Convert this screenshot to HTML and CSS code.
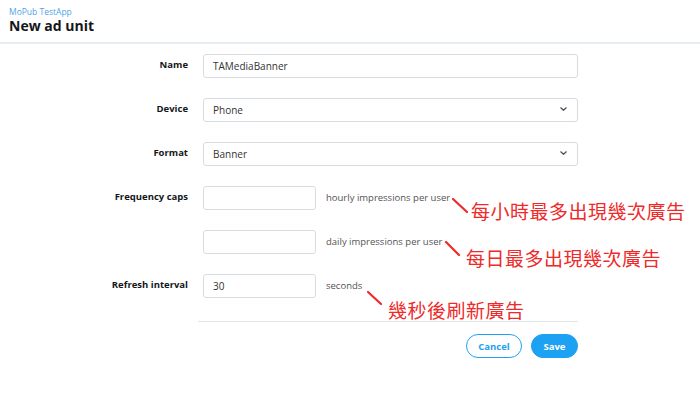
FILE: index.html
```html
<!DOCTYPE html>
<html>
<head>
<meta charset="utf-8">
<link rel="stylesheet" href="styles.css">
</head>
<body>
<header class="top">
  <div class="app">MoPub TestApp</div>
  <h1 class="title">New ad unit</h1>
</header>
<main class="page">
  <form class="form">
    <label class="lbl">Name</label>
    <div class="field"><div class="ctl wide">TAMediaBanner</div></div>

    <label class="lbl">Device</label>
    <div class="field"><div class="ctl wide sel">Phone<svg class="chev" width="7" height="4" viewBox="0 0 7 4"><path d="M0.5 0.5 L3.5 3.3 L6.5 0.5" fill="none" stroke="#4a4f5c" stroke-width="1.2"/></svg></div></div>

    <label class="lbl">Format</label>
    <div class="field"><div class="ctl wide sel">Banner<svg class="chev" width="7" height="4" viewBox="0 0 7 4"><path d="M0.5 0.5 L3.5 3.3 L6.5 0.5" fill="none" stroke="#4a4f5c" stroke-width="1.2"/></svg></div></div>

    <label class="lbl">Frequency caps</label>
    <div class="field"><div class="ctl short"></div><span class="hint">hourly impressions per user</span></div>

    <span class="lbl"></span>
    <div class="field"><div class="ctl short"></div><span class="hint">daily impressions per user</span></div>

    <label class="lbl">Refresh interval</label>
    <div class="field"><div class="ctl short">30</div><span class="hint">seconds</span></div>
  </form>
  <div class="actions">
    <button class="btn cancel" type="button">Cancel</button>
    <button class="btn save" type="button">Save</button>
  </div>
</main>

<svg class="marks" width="700" height="414" viewBox="0 0 700 414">
  <line x1="453" y1="199" x2="467" y2="212" stroke="#ee2a2a" stroke-width="2.2" stroke-linecap="round"/>
  <line x1="446" y1="242" x2="459" y2="255" stroke="#ee2a2a" stroke-width="2.2" stroke-linecap="round"/>
  <line x1="368" y1="292" x2="381" y2="304" stroke="#ee2a2a" stroke-width="2.2" stroke-linecap="round"/>
</svg>
<div class="note n1">每小時最多出現幾次廣告</div>
<div class="note n2">每日最多出現幾次廣告</div>
<div class="note n3">幾秒後刷新廣告</div>
</body>
</html>
```
FILE: styles.css
```css
* { box-sizing: border-box; }
html, body { margin: 0; padding: 0; background: #fff; }
body {
  width: 700px;
  height: 414px;
  position: relative;
  overflow: hidden;
  font-family: "Open Sans", "Noto Sans", sans-serif;
  color: #14171a;
}
.top {
  padding: 6px 9px 0;
  height: 44px;
  border-bottom: 2px solid #e6ecf0;
}
.app {
  font-size: 8.5px;
  line-height: 11px;
  color: #4fa3e8;
}
.title {
  margin: 0;
  font-size: 14px;
  line-height: 17px;
  font-weight: 700;
  color: #14171a;
}
.page {
  padding-top: 10px;
  margin-left: 198px;
  width: 380px;
}
.form {
  display: grid;
  grid-template-columns: 100px 375px;
  margin-left: -110px;
  column-gap: 15px;
  row-gap: 20px;
}
.lbl {
  text-align: right;
  font-size: 9.5px;
  font-weight: 700;
  color: #14171a;
  padding-top: 5px;
  line-height: 11px;
}
.field {
  display: flex;
  align-items: center;
  gap: 10px;
  height: 24px;
}
.ctl {
  height: 24px;
  border: 1px solid #d6dce1;
  border-radius: 3px;
  background: #fff;
  font-size: 10px;
  line-height: 22px;
  padding: 0 9px;
  color: #333;
}
.wide { width: 375px; }
.short { width: 113px; }
.sel { display: flex; align-items: center; justify-content: space-between; padding-right: 10px; }
.chev { display: block; margin-top: -2px; }
.hint {
  font-size: 9.5px;
  color: #545454;
  margin-top: -1px;
}
.actions {
  margin-top: 23px;
  border-top: 1px solid #e1e6ea;
  padding-top: 12px;
  display: flex;
  justify-content: flex-end;
  gap: 9px;
}
.btn {
  height: 24px;
  border-radius: 12px;
  font-family: "Open Sans", "Noto Sans", sans-serif;
  font-size: 9.5px;
  font-weight: 700;
  padding: 0;
  cursor: pointer;
}
.cancel {
  width: 56px;
  background: #fff;
  color: #1da1f2;
  border: 1px solid #1da1f2;
}
.save {
  width: 47px;
  background: #1da1f2;
  color: #fff;
  border: 1px solid #1da1f2;
}
.marks { position: absolute; left: 0; top: 0; pointer-events: none; }
.note {
  position: absolute;
  font-family: "Noto Sans CJK TC", "Noto Sans CJK SC", sans-serif;
  font-size: 19px;
  line-height: 22px;
  color: #ee2a2a;
  letter-spacing: 0.5px;
  white-space: nowrap;
}
.n1 { left: 471px; top: 200px; }
.n2 { left: 466px; top: 247px; }
.n3 { left: 388px; top: 299px; }
```
